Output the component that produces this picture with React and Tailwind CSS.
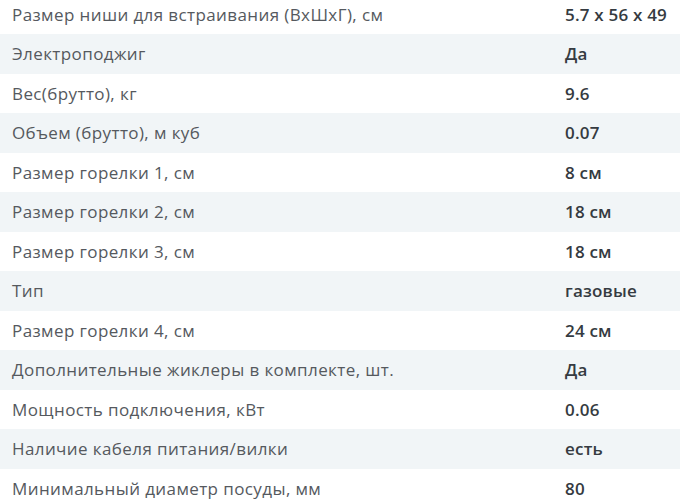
import React from 'react';

const specs = [
  ['Размер ниши для встраивания (ВхШхГ), см', '5.7 x 56 x 49'],
  ['Электроподжиг', 'Да'],
  ['Вес(брутто), кг', '9.6'],
  ['Объем (брутто), м куб', '0.07'],
  ['Размер горелки 1, см', '8 см'],
  ['Размер горелки 2, см', '18 см'],
  ['Размер горелки 3, см', '18 см'],
  ['Тип', 'газовые'],
  ['Размер горелки 4, см', '24 см'],
  ['Дополнительные жиклеры в комплекте, шт.', 'Да'],
  ['Мощность подключения, кВт', '0.06'],
  ['Наличие кабеля питания/вилки', 'есть'],
  ['Минимальный диаметр посуды, мм', '80'],
];

export default function App() {
  return (
    <div className="w-[680px] h-[502px] overflow-hidden bg-white font-['Open_Sans',sans-serif]">
      <div className="-mt-[5.5px]">
        {specs.map(([label, value], i) => (
          <div
            key={label}
            className={`flex items-center h-[39.5px] ${i % 2 === 1 ? 'bg-[#f1f5f7]' : 'bg-white'}`}
          >
            <div className="w-[565px] pl-3 text-[17px] text-[#55595e] tracking-[0.4px]">{label}</div>
            <div className="flex-1 text-[17px] font-semibold text-[#353b41] tracking-[0.2px]">{value}</div>
          </div>
        ))}
      </div>
    </div>
  );
}
